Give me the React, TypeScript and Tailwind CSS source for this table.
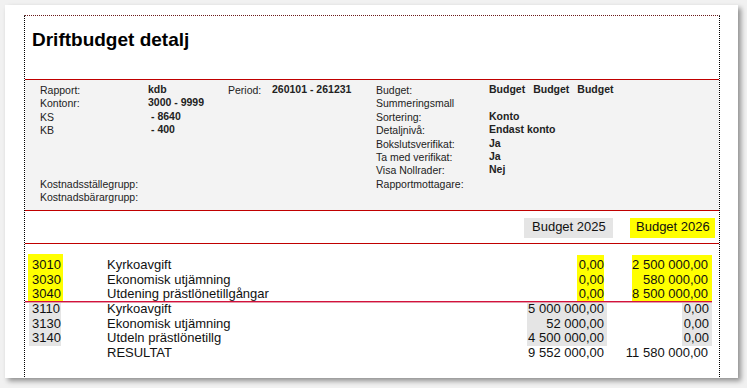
type Row = { code: string; name: string; a: string; b: string };

const groupOne: Row[] = [
  { code: "3010", name: "Kyrkoavgift", a: "0,00", b: "2 500 000,00" },
  { code: "3030", name: "Ekonomisk utjämning", a: "0,00", b: "580 000,00" },
  { code: "3040", name: "Utdening prästlönetillgångar", a: "0,00", b: "8 500 000,00" },
];

const groupTwo: Row[] = [
  { code: "3110", name: "Kyrkoavgift", a: "5 000 000,00", b: "0,00" },
  { code: "3130", name: "Ekonomisk utjämning", a: "52 000,00", b: "0,00" },
  { code: "3140", name: "Utdeln prästlönetillg", a: "4 500 000,00", b: "0,00" },
];

const rightInfo: [string, string][] = [
  ["Budget:", ""],
  ["Summeringsmall", ""],
  ["Sortering:", "Konto"],
  ["Detaljnivå:", "Endast konto"],
  ["Bokslutsverifikat:", "Ja"],
  ["Ta med verifikat:", "Ja"],
  ["Visa Nollrader:", "Nej"],
  ["Rapportmottagare:", ""],
];

function Lines({ items }: { items: string[] }) {
  return (
    <>
      {items.map((t, i) => (
        <div key={i} className="whitespace-pre">
          {t}
        </div>
      ))}
    </>
  );
}

export default function App() {
  return (
    <div className="w-[747px] h-[388px] bg-[#f1f1f1] pt-[5px] pl-[5px] font-['Liberation_Sans',Arial,sans-serif] text-[#111]">
      <div className="w-[733px] h-[373px] bg-white shadow-[3px_3px_5px_rgba(0,0,0,0.4)] overflow-hidden pt-[10px] pl-[19px]">
        <div className="w-[696px] h-[400px] border-x border-t border-dotted border-black border-t-[#6b1a1a]">
          {/* Title */}
          <div className="h-[64px] border-b border-[#c00000] pt-[13px] pl-[7px]">
            <h1 className="text-[19px] leading-[22px] font-bold text-black">Driftbudget detalj</h1>
          </div>

          {/* Report parameters */}
          <div className="h-[131px] bg-[#f3f3f3] border-b border-[#c00000] pt-[4px] pl-[15px] flex text-[10.5px] leading-[13.4px] text-[#222]">
            <div className="w-[336px]">
              <div className="grid grid-cols-[108px_80px_44px_1fr]">
                <div>Rapport:</div>
                <div className="font-bold -translate-y-[1px]">kdb</div>
                <div>Period:</div>
                <div className="font-bold -translate-y-[1px]">260101 - 261231</div>
                <div>Kontonr:</div>
                <div className="font-bold col-span-3 -translate-y-[1px]">3000 - 9999</div>
                <div>KS</div>
                <div className="font-bold col-span-3 pl-[3px] -translate-y-[1px]">- 8640</div>
                <div>KB</div>
                <div className="font-bold col-span-3 pl-[3px] -translate-y-[1px]">- 400</div>
              </div>
              <div className="mt-[40.2px]">
                <div>Kostnadsställegrupp:</div>
                <div>Kostnadsbärargrupp:</div>
              </div>
            </div>
            <div className="grid grid-cols-[113px_1fr] content-start">
              {rightInfo.map(([label, value], i) => (
                <div key={label} className="contents">
                  <div>{label}</div>
                  {i === 0 ? (
                    <div className="font-bold flex gap-[8px] -translate-y-[1px]">
                      <span>Budget</span>
                      <span>Budget</span>
                      <span>Budget</span>
                    </div>
                  ) : (
                    <div className="font-bold -translate-y-[1px]">{value}</div>
                  )}
                </div>
              ))}
            </div>
          </div>

          {/* Column headers */}
          <div className="h-[33px] border-b border-[#c00000] flex justify-end items-start gap-[17px] pr-[4px] pt-[7px] text-[13px] leading-[15px]">
            <div className="h-[20px] w-[89px] bg-[#e5e5e5] pt-[1px] pl-[8px]">Budget 2025</div>
            <div className="h-[20px] w-[85px] bg-[#ffff00] pt-[1px] pl-[6px]">Budget 2026</div>
          </div>

          {/* Rows */}
          <div className="pt-[10px] text-[13px] leading-[14.67px]">
            <div className="flex">
              <div className="w-[82px]">
                <div className="ml-[3px] w-[35px] pl-[4px] pt-[4px] bg-[#ffff00]">
                  <Lines items={groupOne.map((r) => r.code)} />
                </div>
              </div>
              <div className="flex-1 pt-[4px]">
                <Lines items={groupOne.map((r) => r.name)} />
              </div>
              <div className="w-[90px] flex justify-end items-start">
                <div className="mr-[3px] mt-[1px] pt-[3px] w-[27px] text-right bg-[#ffff00] h-[46px]">
                  <Lines items={groupOne.map((r) => r.a)} />
                </div>
              </div>
              <div className="w-[15px]" />
              <div className="w-[90px] flex justify-end items-start">
                <div className="w-[80px] pr-[4px] mt-[1px] pt-[3px] text-right bg-[#ffff00] h-[46px]">
                  <Lines items={groupOne.map((r) => r.b)} />
                </div>
              </div>
              <div className="w-[7px]" />
            </div>

            <div className="relative z-10 -my-[1px] mr-[7px] h-[2px] border-t border-b border-t-[#d3123c] border-b-[#e59aab]" />

            <div className="flex">
              <div className="w-[82px]">
                <div className="ml-[4px] w-[32px] pl-[3px] bg-[#e5e5e5]">
                  <Lines items={groupTwo.map((r) => r.code)} />
                </div>
              </div>
              <div className="flex-1">
                <Lines items={[...groupTwo.map((r) => r.name), "RESULTAT"]} />
              </div>
              <div className="w-[90px] flex flex-col items-end">
                <div className="w-[80px] pr-[3px] text-right bg-[#e5e5e5]">
                  <Lines items={groupTwo.map((r) => r.a)} />
                </div>
                <div className="pr-[3px] whitespace-pre">9 552 000,00</div>
              </div>
              <div className="w-[15px]" />
              <div className="w-[90px] flex flex-col items-end">
                <div className="w-[30px] pr-[3px] text-right bg-[#e5e5e5]">
                  <Lines items={groupTwo.map((r) => r.b)} />
                </div>
                <div className="pr-[4px] whitespace-pre">11 580 000,00</div>
              </div>
              <div className="w-[7px]" />
            </div>
          </div>
        </div>
      </div>
    </div>
  );
}
